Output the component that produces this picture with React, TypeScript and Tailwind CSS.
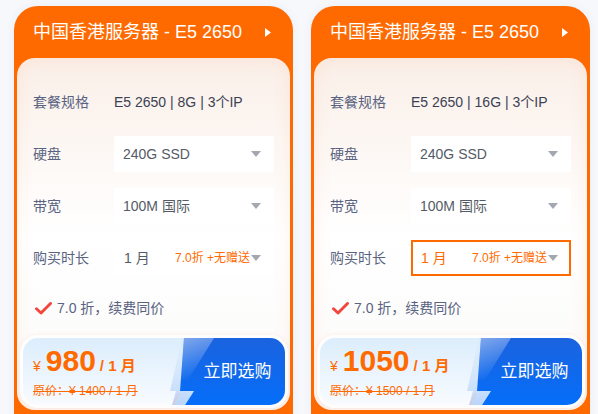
import React from "react";

const font = { fontFamily: '"Liberation Sans", "Noto Sans CJK SC", Arial, sans-serif' };

function Caret() {
  return (
    <svg width="10" height="6" viewBox="0 0 10 6" className="shrink-0">
      <polygon points="0,0 10,0 5,6" fill="#a3a7b0" />
    </svg>
  );
}

function Check() {
  return (
    <svg width="17" height="13" viewBox="0 0 17 13" className="shrink-0">
      <path d="M1.5 6.8 L6 11 L15.5 1.5" fill="none" stroke="#f2453d" strokeWidth="2.9" strokeLinecap="round" strokeLinejoin="round" />
    </svg>
  );
}

function BuyButton() {
  return (
    <div className="relative w-[115px] h-full shrink-0 flex items-center justify-center pl-[20px]">
      <svg className="absolute inset-0" width="115" height="67" viewBox="0 0 115 67" preserveAspectRatio="none">
        <defs>
          <linearGradient id="bb" x1="0" y1="0" x2="0" y2="1">
            <stop offset="0" stopColor="#1b63df" />
            <stop offset="1" stopColor="#056ef9" />
          </linearGradient>
          <linearGradient id="gl" x1="0" y1="0" x2="0.3" y2="1">
            <stop offset="0" stopColor="#ffffff" stopOpacity="0.45" />
            <stop offset="1" stopColor="#ffffff" stopOpacity="0" />
          </linearGradient>
          <linearGradient id="lt" x1="0" y1="0" x2="0" y2="1">
            <stop offset="0" stopColor="#d6e8fd" stopOpacity="0.2" />
            <stop offset="1" stopColor="#b9d5fb" />
          </linearGradient>
        </defs>
        <polygon points="12,0 16,0 10,53 24,53 15,67 2,67 6,53 0,53" fill="url(#lt)" />
        <path d="M14 0 H115 V67 H15 L24 53 H10 Z" fill="url(#bb)" />
        <polygon points="14,0 44,0 18,42 11,42" fill="url(#gl)" />
        <line x1="3" y1="67" x2="9" y2="55" stroke="#f7b9b9" strokeWidth="0.8" />
      </svg>
      <span className="relative text-white text-[17px]">立即选购</span>
    </div>
  );
}

function Card({ mem, price, orig, active }: { mem: string; price: string; orig: string; active?: boolean }) {
  return (
    <div className="w-[279px] h-[416px] shrink-0 rounded-t-[24px] bg-[#ff6a00] px-[3px] flex flex-col shadow-[0_0_10px_rgba(40,60,100,0.06)]">
      <div className="h-[52px] shrink-0 flex items-center justify-between pl-[16px] pr-[19px]">
        <span className="text-white text-[18px] leading-none">中国香港服务器 - E5 2650</span>
        <svg width="6" height="9" viewBox="0 0 6 9">
          <polygon points="0,0 6,4.5 0,9" fill="#ffffff" />
        </svg>
      </div>
      <div className="h-[352px] shrink-0 rounded-[18px] bg-gradient-to-b from-[#faefe8] via-white to-[#fbfaf9] shadow-[inset_0_0_18px_rgba(255,150,90,0.13)] flex flex-col">
        <div className="px-[16px] pt-[26px] flex flex-col gap-[16px]">
          <div className="h-[36px] flex items-center">
            <span className="w-[81px] text-[14px] text-[#5a6482]">套餐规格</span>
            <span className="text-[14px] text-[#3b4254]">E5 2650 | {mem} | 3个IP</span>
          </div>
          <div className="h-[36px] flex items-center">
            <span className="w-[81px] text-[14px] text-[#5a6482]">硬盘</span>
            <div className="flex-1 h-full bg-white flex items-center justify-between pl-[9px] pr-[13px]">
              <span className="text-[14px] text-[#555b66]">240G SSD</span>
              <Caret />
            </div>
          </div>
          <div className="h-[36px] flex items-center">
            <span className="w-[81px] text-[14px] text-[#5a6482]">带宽</span>
            <div className="flex-1 h-full bg-white flex items-center justify-between pl-[9px] pr-[13px]">
              <span className="text-[14px] text-[#555b66]">100M 国际</span>
              <Caret />
            </div>
          </div>
          <div className="h-[36px] flex items-center">
            <span className="w-[81px] text-[14px] text-[#5a6482]">购买时长</span>
            <div
              className={
                active
                  ? "flex-1 h-full bg-white border-2 border-[#ff6a00] flex items-center pl-[8px] pr-[11px]"
                  : "flex-1 h-full bg-white flex items-center pl-[10px] pr-[13px]"
              }
            >
              <span className={active ? "text-[14px] text-[#ff6a00]" : "text-[14px] text-[#555b66]"}>1 月</span>
              <span className="ml-auto mr-[1px] text-[12px] text-[#ff6a00]">7.0折 +无赠送</span>
              <Caret />
            </div>
          </div>
        </div>
        <div className="mt-[22px] h-[20px] px-[18px] flex items-center gap-[5px]">
          <Check />
          <span className="text-[14px] text-[#5a6482]">7.0 折，续费同价</span>
        </div>
        <div className="mt-[17px] ml-[3px] mr-[2px] h-[73px] rounded-[18px] bg-white/80 p-[3px] shadow-[0_0_4px_rgba(255,140,80,0.15)]">
          <div className="h-full rounded-[15px] overflow-hidden flex bg-gradient-to-b from-[#dcedfc] to-[#f8fbff]">
            <div className="flex-1 flex flex-col pl-[10px] pt-[8px]">
              <div className="flex items-baseline text-[#ff6a00] leading-none">
                <span className="text-[14px] mr-[5px]">¥</span>
                <span className="text-[30px] font-bold">{price}</span>
                <span className="text-[15px] font-bold ml-[4px]">/ 1 月</span>
              </div>
              <span className="mt-[7px] text-[12px] leading-[16px] text-[#ff6a00] line-through">原价：¥ {orig} / 1 月</span>
            </div>
            <BuyButton />
          </div>
        </div>
      </div>
    </div>
  );
}

export default function App() {
  return (
    <div style={font} className="w-[598px] h-[414px] overflow-hidden bg-[#f6f8fc]">
      <div className="flex gap-[18px] pl-[14px] pt-[6px]">
        <Card mem="8G" price="980" orig="1400" />
        <Card mem="16G" price="1050" orig="1500" active />
      </div>
    </div>
  );
}
